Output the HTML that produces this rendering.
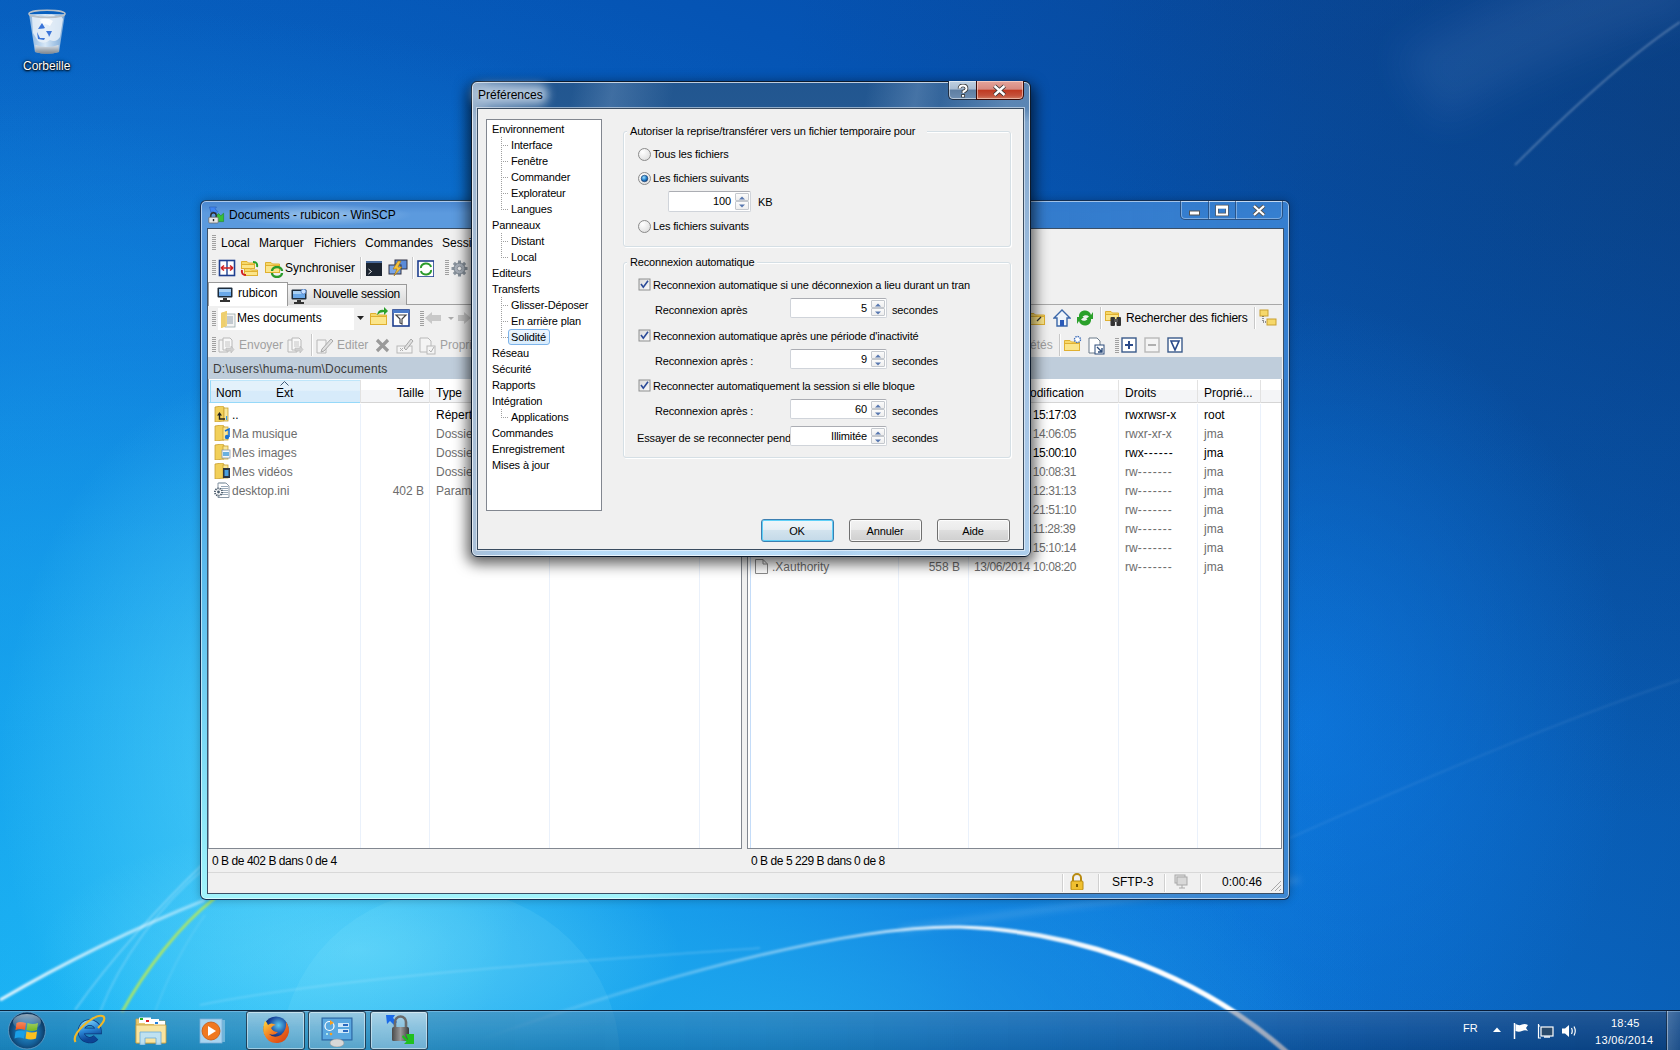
<!DOCTYPE html>
<html><head><meta charset="utf-8">
<style>
*{box-sizing:border-box;margin:0;padding:0}
html,body{width:1680px;height:1050px;overflow:hidden}
body{position:relative;font-family:"Liberation Sans",sans-serif;font-size:12px;color:#000}
.abs{position:absolute}
.t{position:absolute;white-space:pre;line-height:1}
</style></head><body>
<div class="abs" style="left:0;top:0;width:1680px;height:1050px;background:
 radial-gradient(ellipse 270px 400px at 270px 770px, rgba(100,222,252,0.6) 0%, rgba(90,215,250,0) 100%),
 radial-gradient(ellipse 500px 500px at 0px 600px, rgba(20,160,236,0.35) 0%, rgba(20,160,236,0) 100%),
 radial-gradient(ellipse 320px 130px at 360px 950px, rgba(120,225,252,0.55) 0%, rgba(120,225,252,0) 100%),
 radial-gradient(ellipse 1250px 1050px at 130px 1060px, rgba(30,186,246,1) 0%, rgba(25,170,240,0.9) 35%, rgba(20,140,230,0.55) 68%, rgba(20,130,225,0) 100%),
 radial-gradient(ellipse 560px 230px at 760px 1030px, rgba(62,206,250,0.7) 0%, rgba(40,170,240,0.35) 55%, rgba(20,130,225,0) 100%),
 radial-gradient(ellipse 320px 420px at 1310px 720px, rgba(16,130,238,0.55) 0%, rgba(16,130,238,0) 100%),
 radial-gradient(ellipse 900px 700px at 1680px 120px, rgba(14,56,104,0.4) 0%, rgba(14,56,104,0) 100%),
 radial-gradient(ellipse 1500px 1150px at 0px 1050px, rgba(16,130,226,0.45) 0%, rgba(16,130,226,0) 100%),
 linear-gradient(90deg, rgba(10,50,100,0) 65%, rgba(10,50,100,0.2) 100%),
 linear-gradient(200deg,#0848a0 0%,#0554b4 22%,#0864c4 46%,#0a70d2 70%,#0b76d8 100%);"></div>
<svg class="abs" style="left:0;top:0" width="1680" height="1050" viewBox="0 0 1680 1050">
<defs>
<filter id="bl1" x="-20%" y="-20%" width="140%" height="140%"><feGaussianBlur stdDeviation="1.2"/></filter>
<filter id="bl3" x="-20%" y="-20%" width="140%" height="140%"><feGaussianBlur stdDeviation="3"/></filter>
<linearGradient id="arcg" x1="0" x2="1" y1="0" y2="0">
<stop offset="0" stop-color="#fff" stop-opacity="0"/><stop offset="0.45" stop-color="#fff" stop-opacity="0.5"/><stop offset="0.62" stop-color="#fff" stop-opacity="1"/><stop offset="1" stop-color="#fff" stop-opacity="0.9"/></linearGradient>
<linearGradient id="lsw" x1="0" x2="1" y1="0" y2="0">
<stop offset="0" stop-color="#fff" stop-opacity="0.9"/><stop offset="1" stop-color="#fff" stop-opacity="0.4"/></linearGradient>
</defs>
<circle cx="450" cy="1060" r="170" fill="#bff" fill-opacity="0.08"/>
<path d="M480 1040 C 680 968, 860 925, 960 927 C 1060 930, 1190 965, 1290 1055" fill="none" stroke="url(#arcg)" stroke-width="3" filter="url(#bl1)"/>
<path d="M900 930 C 1000 915, 1150 895, 1300 880" fill="none" stroke="#fff" stroke-opacity="0.12" stroke-width="6" filter="url(#bl3)"/><linearGradient id="thk" gradientUnits="userSpaceOnUse" x1="960" y1="0" x2="1120" y2="0"><stop offset="0" stop-color="#fff" stop-opacity="0"/><stop offset="1" stop-color="#fff" stop-opacity="1"/></linearGradient><path d="M960 927 C 1060 930, 1190 965, 1290 1055" fill="none" stroke="url(#thk)" stroke-width="4.5" filter="url(#bl1)"/>
<path d="M200 1005 C 350 975, 600 960, 760 948" fill="none" stroke="#fff" stroke-opacity="0.2" stroke-width="1.5" filter="url(#bl1)"/>
<path d="M0 1000 C 60 965, 130 930, 205 900" fill="none" stroke="url(#lsw)" stroke-width="3" filter="url(#bl1)"/>
<path d="M75 1010 C 110 960, 160 905, 205 862" fill="none" stroke="#fff" stroke-opacity="0.35" stroke-width="1.5" filter="url(#bl1)"/>
<path d="M122 1012 C 145 970, 180 925, 215 898" fill="none" stroke="#b0e860" stroke-opacity="1" stroke-width="2.6" filter="url(#bl1)"/><path d="M100 1012 C 120 960, 160 905, 205 868" fill="none" stroke="#fff" stroke-opacity="0.3" stroke-width="1.2" filter="url(#bl1)"/><path d="M155 1012 C 165 985, 180 950, 205 915" fill="none" stroke="#fff" stroke-opacity="0.2" stroke-width="1" filter="url(#bl1)"/>
<path d="M1290 838 C 1420 780, 1560 720, 1680 680" fill="none" stroke="#fff" stroke-opacity="0.07" stroke-width="2" filter="url(#bl1)"/>
<path d="M1515 165 C 1570 110, 1630 55, 1680 22" fill="none" stroke="#fff" stroke-opacity="0.3" stroke-width="1.5" filter="url(#bl1)"/>
<filter id="bl20" x="-50%" y="-50%" width="200%" height="200%"><feGaussianBlur stdDeviation="18"/></filter><path d="M1420 90 C 1480 50, 1570 10, 1690 -30" fill="none" stroke="#a8c8f0" stroke-opacity="0.09" stroke-width="80" filter="url(#bl20)"/>
</svg>
<svg class="abs" style="left:26px;top:7px;" width="42" height="50" viewBox="0 0 42 50">
<defs>
<linearGradient id="binb" x1="0" x2="1"><stop offset="0" stop-color="#b8d0e8" stop-opacity="0.75"/><stop offset="0.45" stop-color="#eef6fc" stop-opacity="0.9"/><stop offset="1" stop-color="#a8c4e0" stop-opacity="0.7"/></linearGradient>
<linearGradient id="binf" x1="0" x2="0" y1="0" y2="1"><stop offset="0" stop-color="#dfe6ee"/><stop offset="0.5" stop-color="#a8b0b8"/><stop offset="1" stop-color="#7a848e"/></linearGradient>
</defs>
<path d="M3 7 L9 45 Q21 48 33 45 L39 7 Z" fill="url(#binb)"/>
<path d="M6 10 Q12 6 18 11 Q24 5 30 9 Q35 8 37 12 L34 30 Q30 36 24 33 Q18 38 12 34 L7 26Z" fill="#e8f0f8" fill-opacity="0.85"/>
<path d="M14 13 Q20 9 27 14 L24 19 Q20 16 16 18Z" fill="#ffffff" fill-opacity="0.8"/>
<path d="M9.5 38 Q21 42 32.5 38 L33 45 Q21 49 9 45Z" fill="url(#binf)"/>
<ellipse cx="21" cy="6.8" rx="18" ry="3.6" fill="none" stroke="#b8c0c8" stroke-width="1.6"/>
<path d="M12 22 L16 16 L19 21 L17.5 21.5 Z" fill="#3a74d8"/>
<path d="M20 24 L26 24 L23 30 L22.5 28Z" fill="#3a74d8"/>
<path d="M11 25 L14 31 L19 31 L18 33 L12 32Z" fill="#3a74d8"/>
</svg>
<div class="t" style="left:23px;top:60px;font-size:12px;color:#fff;text-shadow:0 1px 2px #000,0 0 2px #000,0 0 4px rgba(0,0,0,0.6)">Corbeille</div>
<div class="abs" style="left:200px;top:200px;width:1090px;height:700px;border-radius:6px;border:1px solid rgba(10,30,60,0.85);
background:linear-gradient(90deg,rgba(44,118,202,0) 0%,rgba(44,118,202,0) 40%,rgba(44,118,202,0.85) 75%,rgba(50,124,206,0.9) 100%),linear-gradient(180deg,#4886d0 0px,#5c9ade 12px,#5a9ade 28px,#4a98de 200px,#5cbcee 380px,#80dcf6 560px,#a2f4fb 700px);
box-shadow:inset 0 0 0 1px rgba(255,255,255,0.55), 0 0 8px rgba(0,0,0,0.25)"></div>
<div class="abs" style="left:222px;top:204px;width:190px;height:22px;background:radial-gradient(ellipse 95px 11px at 95px 11px, rgba(200,225,245,0.55), rgba(200,225,245,0))"></div>
<svg class="abs" style="left:208px;top:206px;" width="18" height="18" viewBox="0 0 18 18">
<path d="M1.5 1 H8.5 L7 2.8 L9.8 5.6 L7.6 7.8 L4.8 5 L3 6.6 Z" fill="#3f86f4" stroke="#2a5ab0" stroke-width="0.6"/>
<path d="M10.5 7.5 L12.8 9.8 L15.6 7.2 V15.6 H7.4 L10 13 L7.8 10.6Z" fill="#38c038" stroke="#1f8a1f" stroke-width="0.6"/>
<path d="M2.8 11.5 V9.5 A2.7 2.7 0 0 1 8.2 9.5 V11.5" fill="none" stroke="#2a2a2a" stroke-width="1.4"/>
<rect x="0.8" y="11.2" width="9.4" height="5.8" rx="0.8" fill="#e8e8e8" stroke="#6a6a6a" stroke-width="0.8"/>
<rect x="4.8" y="13" width="1.4" height="2.2" fill="#222"/>
</svg>
<div class="t" style="left:229px;top:209px;font-size:12px;color:#000;">Documents - rubicon - WinSCP</div>
<div class="abs" style="left:1180px;top:201px;width:103px;height:19px;border:1px solid rgba(30,50,80,0.6);border-top:none;border-radius:0 0 5px 5px;box-shadow:inset 0 0 0 1px rgba(255,255,255,0.35)"></div>
<div class="abs" style="left:1208px;top:201px;width:1px;height:18px;background:rgba(30,50,80,0.55);box-shadow:1px 0 0 rgba(255,255,255,0.35)"></div>
<div class="abs" style="left:1235px;top:201px;width:1px;height:18px;background:rgba(30,50,80,0.55);box-shadow:1px 0 0 rgba(255,255,255,0.35)"></div>
<svg class="abs" style="left:1188px;top:206px;" width="13" height="12" viewBox="0 0 13 12"><rect x="1.5" y="5" width="10" height="4" fill="#fff" stroke="#555" stroke-width="1"/></svg>
<svg class="abs" style="left:1215px;top:204px;" width="14" height="14" viewBox="0 0 14 14"><rect x="2" y="2.5" width="10" height="8" fill="none" stroke="#555" stroke-width="3.4"/><rect x="2" y="2.5" width="10" height="8" fill="none" stroke="#fff" stroke-width="2"/><rect x="2" y="2.5" width="10" height="2.2" fill="#fff"/></svg>
<svg class="abs" style="left:1252px;top:204px;" width="14" height="13" viewBox="0 0 14 13"><path d="M2 2 L12 11 M12 2 L2 11" stroke="#555" stroke-width="4"/><path d="M2 2 L12 11 M12 2 L2 11" stroke="#fff" stroke-width="2.2"/></svg>
<div class="abs" style="left:207px;top:228px;width:1077px;height:666px;background:#f0f0f0;border:1px solid #3b4f66"></div>
<svg class="abs" style="left:212px;top:235px;" width="4" height="16" viewBox="0 0 4 16"><rect x="0" y="0" width="4" height="1" fill="#a0a0a0"/><rect x="0" y="2" width="4" height="1" fill="#a0a0a0"/><rect x="0" y="4" width="4" height="1" fill="#a0a0a0"/><rect x="0" y="6" width="4" height="1" fill="#a0a0a0"/><rect x="0" y="8" width="4" height="1" fill="#a0a0a0"/><rect x="0" y="10" width="4" height="1" fill="#a0a0a0"/><rect x="0" y="12" width="4" height="1" fill="#a0a0a0"/><rect x="0" y="14" width="4" height="1" fill="#a0a0a0"/></svg>
<div class="t" style="left:221px;top:237px;font-size:12px;color:#000;">Local</div>
<div class="t" style="left:259px;top:237px;font-size:12px;color:#000;">Marquer</div>
<div class="t" style="left:314px;top:237px;font-size:12px;color:#000;">Fichiers</div>
<div class="t" style="left:365px;top:237px;font-size:12px;color:#000;">Commandes</div>
<div class="t" style="left:442px;top:237px;font-size:12px;color:#000;">Sessions</div>
<svg class="abs" style="left:212px;top:260px;" width="4" height="16" viewBox="0 0 4 16"><rect x="0" y="0" width="4" height="1" fill="#a0a0a0"/><rect x="0" y="2" width="4" height="1" fill="#a0a0a0"/><rect x="0" y="4" width="4" height="1" fill="#a0a0a0"/><rect x="0" y="6" width="4" height="1" fill="#a0a0a0"/><rect x="0" y="8" width="4" height="1" fill="#a0a0a0"/><rect x="0" y="10" width="4" height="1" fill="#a0a0a0"/><rect x="0" y="12" width="4" height="1" fill="#a0a0a0"/><rect x="0" y="14" width="4" height="1" fill="#a0a0a0"/></svg>
<svg class="abs" style="left:218px;top:259px;" width="18" height="18" viewBox="0 0 18 18"><rect x="1.5" y="1.5" width="15" height="15" fill="#fff" stroke="#1f3f8f" stroke-width="1.6"/><line x1="9" y1="1" x2="9" y2="17" stroke="#1f3f8f" stroke-width="1.4"/><path d="M3 9 H15 M3 9 L6 6.5 M3 9 L6 11.5 M15 9 L12 6.5 M15 9 L12 11.5" stroke="#d02020" stroke-width="1.6" fill="none"/></svg>
<svg class="abs" style="left:241px;top:259px;" width="14" height="10" viewBox="0 0 14 10"><path d="M0.5 2.5 H6 L7.5 4 H13.5 V9.5 H0.5Z" fill="#f6d86a" stroke="#e0b030" stroke-width="1"/><rect x="0.5" y="5.5" width="13" height="4" fill="#fbe58a" stroke="#e0b030" stroke-width="1"/></svg>
<svg class="abs" style="left:244px;top:266px;" width="14" height="10" viewBox="0 0 14 10"><path d="M0.5 2.5 H6 L7.5 4 H13.5 V9.5 H0.5Z" fill="#f6d86a" stroke="#e0b030" stroke-width="1"/><rect x="0.5" y="5.5" width="13" height="4" fill="#fbe58a" stroke="#e0b030" stroke-width="1"/></svg>
<svg class="abs" style="left:240px;top:259px;" width="20" height="19" viewBox="0 0 20 19"><path d="M13 3 Q18 3 17 8" stroke="#28a028" stroke-width="2" fill="none"/><path d="M6 16 Q1 16 2 11" stroke="#d02020" stroke-width="2" fill="none"/></svg>
<svg class="abs" style="left:265px;top:260px;" width="15" height="13" viewBox="0 0 15 13"><path d="M0.5 2.5 H6 L7.5 4 H14.5 V12.5 H0.5Z" fill="#f6d86a" stroke="#e0b030" stroke-width="1"/><rect x="0.5" y="5.5" width="14" height="7" fill="#fbe58a" stroke="#e0b030" stroke-width="1"/></svg>
<svg class="abs" style="left:270px;top:266px;" width="14" height="12" viewBox="0 0 14 12"><path d="M2 5 A5 4 0 0 1 12 5" stroke="#2a9a2a" stroke-width="2.4" fill="none"/><path d="M12 7 A5 4 0 0 1 2 7" stroke="#2a9a2a" stroke-width="2.4" fill="none"/></svg>
<div class="t" style="left:285px;top:262px;font-size:12px;color:#000;">Synchroniser</div>
<div class="abs" style="left:360px;top:257px;width:1px;height:22px;background:#c8c8c8;box-shadow:1px 0 0 #fff"></div>
<svg class="abs" style="left:366px;top:261px;" width="16" height="15" viewBox="0 0 16 15"><rect x="0" y="0" width="16" height="15" fill="#1c2430"/><rect x="0" y="0" width="16" height="2" fill="#4a6a9a"/><path d="M2.5 8 L5.5 10.5 L2.5 13" stroke="#fff" stroke-width="0.9" fill="none"/></svg>
<svg class="abs" style="left:388px;top:259px;" width="20" height="18" viewBox="0 0 20 18"><rect x="7" y="1" width="12" height="9" fill="#5a8ad8" stroke="#334" stroke-width="1"/><rect x="1" y="6" width="12" height="9" fill="#7aa6e8" stroke="#334" stroke-width="1"/><path d="M10 2 L5 10 H9 L6 17 L14 8 H10 L13 2Z" fill="#f5c23a" stroke="#a07010" stroke-width="0.6"/></svg>
<div class="abs" style="left:412px;top:257px;width:1px;height:22px;background:#c8c8c8;box-shadow:1px 0 0 #fff"></div>
<svg class="abs" style="left:417px;top:260px;" width="17" height="17" viewBox="0 0 17 17"><rect x="1" y="1" width="16" height="16" fill="#fff" stroke="#1f3f8f" stroke-width="1.6"/><path d="M4 8 A5 4 0 0 1 14 7" stroke="#2a9a2a" stroke-width="2" fill="none"/><path d="M14 10 A5 4 0 0 1 4 11" stroke="#2a9a2a" stroke-width="2" fill="none"/></svg>
<svg class="abs" style="left:445px;top:260px;" width="4" height="16" viewBox="0 0 4 16"><rect x="0" y="0" width="4" height="1" fill="#a0a0a0"/><rect x="0" y="2" width="4" height="1" fill="#a0a0a0"/><rect x="0" y="4" width="4" height="1" fill="#a0a0a0"/><rect x="0" y="6" width="4" height="1" fill="#a0a0a0"/><rect x="0" y="8" width="4" height="1" fill="#a0a0a0"/><rect x="0" y="10" width="4" height="1" fill="#a0a0a0"/><rect x="0" y="12" width="4" height="1" fill="#a0a0a0"/><rect x="0" y="14" width="4" height="1" fill="#a0a0a0"/></svg>
<svg class="abs" style="left:451px;top:260px;" width="17" height="17" viewBox="0 0 17 17"><rect x="7" y="0.5" width="3" height="4" fill="#8a949e" transform="rotate(0 8.5 8.5)"/><rect x="7" y="0.5" width="3" height="4" fill="#8a949e" transform="rotate(45 8.5 8.5)"/><rect x="7" y="0.5" width="3" height="4" fill="#8a949e" transform="rotate(90 8.5 8.5)"/><rect x="7" y="0.5" width="3" height="4" fill="#8a949e" transform="rotate(135 8.5 8.5)"/><rect x="7" y="0.5" width="3" height="4" fill="#8a949e" transform="rotate(180 8.5 8.5)"/><rect x="7" y="0.5" width="3" height="4" fill="#8a949e" transform="rotate(225 8.5 8.5)"/><rect x="7" y="0.5" width="3" height="4" fill="#8a949e" transform="rotate(270 8.5 8.5)"/><rect x="7" y="0.5" width="3" height="4" fill="#8a949e" transform="rotate(315 8.5 8.5)"/><circle cx="8.5" cy="8.5" r="5.5" fill="#a8b0ba" stroke="#7a848e" stroke-width="1"/><circle cx="8.5" cy="8.5" r="2.2" fill="#f0f0f0" stroke="#7a848e" stroke-width="0.8"/></svg>
<div class="abs" style="left:208px;top:304px;width:1074px;height:1px;background:#a0a0a0"></div>
<div class="abs" style="left:1029px;top:304px;width:253px;height:1px;background:#a8a8a8"></div>
<div class="abs" style="left:287px;top:284px;width:120px;height:21px;background:linear-gradient(180deg,#f2f2f2,#e6e6e6 50%,#d8d8d8);border:1px solid #9a9a9a;border-bottom:none"></div>
<div class="abs" style="left:208px;top:282px;width:80px;height:24px;background:#fff;border:1px solid #9a9a9a;border-bottom:none"></div>
<svg class="abs" style="left:217px;top:287px;" width="16" height="15" viewBox="0 0 16 15"><rect x="0.5" y="0.5" width="15" height="10" rx="1" fill="#1d2c3c"/><rect x="2" y="2" width="12" height="7" fill="#6aa8e8"/><rect x="2" y="2" width="12" height="3" fill="#a8d0f4"/><rect x="6" y="11" width="4" height="2" fill="#333"/><rect x="3" y="13" width="10" height="2" fill="#333"/></svg>
<div class="t" style="left:238px;top:287px;font-size:12px;color:#000;">rubicon</div>
<svg class="abs" style="left:291px;top:289px;" width="16" height="15" viewBox="0 0 16 15"><rect x="0.5" y="0.5" width="15" height="10" rx="1" fill="#1d2c3c"/><rect x="2" y="2" width="12" height="7" fill="#6aa8e8"/><rect x="2" y="2" width="12" height="3" fill="#a8d0f4"/><rect x="6" y="11" width="4" height="2" fill="#333"/><rect x="3" y="13" width="10" height="2" fill="#333"/><circle cx="12.5" cy="2.5" r="2.5" fill="#c8e0ff" stroke="#4a7ac0" stroke-width="0.8"/></svg>
<div class="t" style="left:313px;top:288px;font-size:12px;color:#000;letter-spacing:-0.23px">Nouvelle session</div>
<svg class="abs" style="left:212px;top:311px;" width="4" height="16" viewBox="0 0 4 16"><rect x="0" y="0" width="4" height="1" fill="#a0a0a0"/><rect x="0" y="2" width="4" height="1" fill="#a0a0a0"/><rect x="0" y="4" width="4" height="1" fill="#a0a0a0"/><rect x="0" y="6" width="4" height="1" fill="#a0a0a0"/><rect x="0" y="8" width="4" height="1" fill="#a0a0a0"/><rect x="0" y="10" width="4" height="1" fill="#a0a0a0"/><rect x="0" y="12" width="4" height="1" fill="#a0a0a0"/><rect x="0" y="14" width="4" height="1" fill="#a0a0a0"/></svg>
<div class="abs" style="left:218px;top:308px;width:148px;height:22px;background:#fff"></div>
<div class="abs" style="left:354px;top:308px;width:12px;height:22px;background:#f0f0f0"></div>
<svg class="abs" style="left:357px;top:316px;" width="7" height="4" viewBox="0 0 7 4"><path d="M0 0 H7 L3.5 4Z" fill="#222"/></svg>
<svg class="abs" style="left:220px;top:311px;" width="16" height="17" viewBox="0 0 16 17"><path d="M1 2 L7 0 V15 L1 17Z" fill="#e8c050"/><rect x="5" y="3" width="10" height="13" fill="#f4f4f4" stroke="#9aa" stroke-width="0.8"/><path d="M7 6 H13 M7 8 H13 M7 10 H13 M7 12 H13" stroke="#7a8a9a" stroke-width="0.8"/><path d="M1 2 L7 0 V15 L1 17Z" fill="#f0d070" fill-opacity="0.9"/></svg>
<div class="t" style="left:237px;top:312px;font-size:12px;color:#000;">Mes documents</div>
<svg class="abs" style="left:370px;top:311px;" width="17" height="14" viewBox="0 0 17 14"><path d="M0.5 2.5 H6 L7.5 4 H16.5 V13.5 H0.5Z" fill="#f6d86a" stroke="#e0b030" stroke-width="1"/><rect x="0.5" y="5.5" width="16" height="8" fill="#fbe58a" stroke="#e0b030" stroke-width="1"/></svg>
<svg class="abs" style="left:376px;top:307px;" width="12" height="9" viewBox="0 0 12 9"><path d="M1 8 Q2 2 8 3 L8 0 L12 4 L8 8 L8 5 Q4 5 1 8Z" fill="#2aa02a"/></svg>
<svg class="abs" style="left:392px;top:309px;" width="18" height="18" viewBox="0 0 18 18"><rect x="1" y="1" width="16" height="16" fill="#fff" stroke="#1f3f8f" stroke-width="1.6"/><rect x="1" y="1" width="16" height="3" fill="#4a7ac8"/><path d="M4 6 H14 L10 10 V15 L8 14 V10Z" fill="none" stroke="#444" stroke-width="1.2"/></svg>
<svg class="abs" style="left:420px;top:311px;" width="4" height="16" viewBox="0 0 4 16"><rect x="0" y="0" width="4" height="1" fill="#a0a0a0"/><rect x="0" y="2" width="4" height="1" fill="#a0a0a0"/><rect x="0" y="4" width="4" height="1" fill="#a0a0a0"/><rect x="0" y="6" width="4" height="1" fill="#a0a0a0"/><rect x="0" y="8" width="4" height="1" fill="#a0a0a0"/><rect x="0" y="10" width="4" height="1" fill="#a0a0a0"/><rect x="0" y="12" width="4" height="1" fill="#a0a0a0"/><rect x="0" y="14" width="4" height="1" fill="#a0a0a0"/></svg>
<svg class="abs" style="left:425px;top:312px;" width="17" height="12" viewBox="0 0 17 12"><path d="M0 6 L7 0 V3 H16 V9 H7 V12Z" fill="#c8c8c8"/></svg>
<svg class="abs" style="left:448px;top:317px;" width="6" height="4" viewBox="0 0 6 4"><path d="M0 0 H6 L3 3Z" fill="#aaa"/></svg>
<svg class="abs" style="left:458px;top:312px;" width="13" height="12" viewBox="0 0 13 12"><path d="M13 6 L6 0 V3 H0 V9 H6 V12Z" fill="#c8c8c8"/></svg>
<svg class="abs" style="left:212px;top:337px;" width="4" height="16" viewBox="0 0 4 16"><rect x="0" y="0" width="4" height="1" fill="#a0a0a0"/><rect x="0" y="2" width="4" height="1" fill="#a0a0a0"/><rect x="0" y="4" width="4" height="1" fill="#a0a0a0"/><rect x="0" y="6" width="4" height="1" fill="#a0a0a0"/><rect x="0" y="8" width="4" height="1" fill="#a0a0a0"/><rect x="0" y="10" width="4" height="1" fill="#a0a0a0"/><rect x="0" y="12" width="4" height="1" fill="#a0a0a0"/><rect x="0" y="14" width="4" height="1" fill="#a0a0a0"/></svg>
<svg class="abs" style="left:218px;top:337px;" width="17" height="17" viewBox="0 0 17 17"><path d="M1 3 H8 L10 5 V15 H1Z" fill="#f4f4f4" stroke="#b8b8b8" stroke-width="1"/><path d="M5 1 H12 L14 3 V13 H5Z" fill="#f8f8f8" stroke="#b8b8b8" stroke-width="1"/><path d="M7 5 H12 M7 7 H12 M7 9 H12" stroke="#b8b8b8" stroke-width="0.8"/><path d="M8 11 L13 11 L13 9 L16 12.5 L13 16 L13 14 L8 14Z" fill="#d0d0d0" stroke="#b8b8b8" stroke-width="0.6"/></svg>
<div class="t" style="left:239px;top:339px;font-size:12px;color:#a0a0a0;">Envoyer</div>
<svg class="abs" style="left:287px;top:337px;" width="17" height="17" viewBox="0 0 17 17"><path d="M1 3 H8 L10 5 V15 H1Z" fill="#f4f4f4" stroke="#b8b8b8" stroke-width="1"/><path d="M5 1 H12 L14 3 V13 H5Z" fill="#f8f8f8" stroke="#b8b8b8" stroke-width="1"/><path d="M7 5 H12 M7 7 H12 M7 9 H12" stroke="#b8b8b8" stroke-width="0.8"/><path d="M8 11 L13 11 L13 9 L16 12.5 L13 16 L13 14 L8 14Z" fill="#d0d0d0" stroke="#b8b8b8" stroke-width="0.6"/></svg>
<div class="abs" style="left:311px;top:334px;width:1px;height:22px;background:#c8c8c8;box-shadow:1px 0 0 #fff"></div>
<svg class="abs" style="left:316px;top:337px;" width="18" height="18" viewBox="0 0 18 18"><path d="M1 3 H10 V16 H1Z" fill="#f4f4f4" stroke="#b8b8b8" stroke-width="1"/><path d="M6 12 L15 2 L17 4 L8 14 L5 15Z" fill="#e0e0e0" stroke="#a8a8a8" stroke-width="1"/></svg>
<div class="t" style="left:337px;top:339px;font-size:12px;color:#a0a0a0;">Editer</div>
<svg class="abs" style="left:375px;top:338px;" width="15" height="15" viewBox="0 0 15 15"><path d="M2 2 L13 13 M13 2 L2 13" stroke="#9a9a9a" stroke-width="3.2"/></svg>
<svg class="abs" style="left:396px;top:337px;" width="18" height="18" viewBox="0 0 18 18"><rect x="1" y="9" width="15" height="7" fill="#f4f4f4" stroke="#b8b8b8"/><path d="M4 11 L7 14 M7 11 L4 14" stroke="#b0b0b0"/><path d="M8 11 L15 2 L17 4 L10 13Z" fill="#e0e0e0" stroke="#a8a8a8"/></svg>
<svg class="abs" style="left:419px;top:337px;" width="18" height="18" viewBox="0 0 18 18"><path d="M1 1 H9 L12 4 V15 H1Z" fill="#f4f4f4" stroke="#b8b8b8"/><rect x="8" y="9" width="8" height="8" fill="#f4f4f4" stroke="#b8b8b8"/><path d="M10 13 L12 15 L15 10" stroke="#b0b0b0" fill="none"/></svg>
<div class="t" style="left:440px;top:339px;font-size:12px;color:#a0a0a0;">Propriétés</div>
<div class="abs" style="left:208px;top:357px;width:534px;height:22px;background:#bfcddb"></div>
<div class="t" style="left:213px;top:363px;font-size:12px;color:#3c3c3c;letter-spacing:0.19px">D:\users\huma-num\Documents</div>
<div class="abs" style="left:208px;top:379px;width:534px;height:470px;background:#fff;border-right:1px solid #828790;border-bottom:1px solid #828790;border-left:1px solid #9aa6b6"></div>
<div class="abs" style="left:209px;top:380px;width:532px;height:23px;background:linear-gradient(180deg,#ffffff 0,#ffffff 45%,#f4f5f7 46%,#f4f5f7 100%);border-bottom:1px solid #d5d5d5"></div>
<div class="abs" style="left:210px;top:380px;width:151px;height:23px;background:linear-gradient(180deg,#e3f1fb 0,#e3f1fb 45%,#d7ebfa 46%,#d7ebfa 100%);border:1px solid #96d9f9;border-top-color:#bfe6fa"></div>
<svg class="abs" style="left:280px;top:381px;" width="9" height="5" viewBox="0 0 9 5"><path d="M0.5 4.5 L4.5 0.5 L8.5 4.5" fill="none" stroke="#3c5a7a" stroke-width="1"/></svg>
<div class="abs" style="left:360px;top:380px;width:1px;height:23px;background:#e2e2e2"></div>
<div class="abs" style="left:429px;top:380px;width:1px;height:23px;background:#e2e2e2"></div>
<div class="abs" style="left:549px;top:380px;width:1px;height:23px;background:#e2e2e2"></div>
<div class="abs" style="left:699px;top:380px;width:1px;height:23px;background:#e2e2e2"></div>
<div class="t" style="left:216px;top:387px;font-size:12px;color:#000;">Nom</div>
<div class="t" style="left:276px;top:387px;font-size:12px;color:#000;">Ext</div>
<div class="t" style="right:1256px;top:387px;font-size:12px;color:#000;">Taille</div>
<div class="t" style="left:436px;top:387px;font-size:12px;color:#000;">Type</div>
<div class="abs" style="left:360px;top:404px;width:1px;height:444px;background:#eaf1fb"></div>
<div class="abs" style="left:429px;top:404px;width:1px;height:444px;background:#eaf1fb"></div>
<div class="abs" style="left:549px;top:404px;width:1px;height:444px;background:#eaf1fb"></div>
<div class="abs" style="left:699px;top:404px;width:1px;height:444px;background:#eaf1fb"></div>
<svg class="abs" style="left:214px;top:406px;" width="16" height="16" viewBox="0 0 16 16"><path d="M1 1 L8 0 L10 1 V15 L1 16Z" fill="#f2d05a" stroke="#c9a030" stroke-width="0.8"/><rect x="10" y="2" width="4" height="13" fill="#f8e69a" stroke="#c9a030" stroke-width="0.8"/><path d="M11 13 H5.5 V9" stroke="#222" stroke-width="1.4" fill="none"/><path d="M3 9.5 L5.5 6 L8 9.5Z" fill="#222"/><rect x="12" y="10" width="1.2" height="4" fill="#3a9ae0"/></svg>
<div class="t" style="left:232px;top:409px;font-size:12px;color:#000;">..</div>
<div class="t" style="left:436px;top:409px;font-size:12px;color:#000;">Répertoire parent</div>
<svg class="abs" style="left:214px;top:425px;" width="17" height="16" viewBox="0 0 17 16"><path d="M1 1 L8 0 L10 1 V15 L1 16Z" fill="#f2d05a" stroke="#c9a030" stroke-width="0.8"/><rect x="9" y="2" width="5" height="13" fill="#f8e69a" stroke="#c9a030" stroke-width="0.8"/><path d="M11 6 L15 4 V12" stroke="#1a70d0" stroke-width="1.6" fill="none"/><circle cx="13" cy="12" r="2.2" fill="#1a70d0"/></svg>
<div class="t" style="left:232px;top:428px;font-size:12px;color:#6d6d6d;">Ma musique</div>
<div class="t" style="left:436px;top:428px;font-size:12px;color:#6d6d6d;">Dossier système</div>
<svg class="abs" style="left:214px;top:444px;" width="17" height="16" viewBox="0 0 17 16"><path d="M1 1 L8 0 L10 1 V15 L1 16Z" fill="#f2d05a" stroke="#c9a030" stroke-width="0.8"/><rect x="9" y="2" width="5" height="13" fill="#f8e69a" stroke="#c9a030" stroke-width="0.8"/><rect x="8" y="6" width="8" height="8" fill="#f4f8fc" stroke="#8a9aaa" stroke-width="0.8"/><rect x="9" y="8" width="6" height="4" fill="#6ab0e0"/></svg>
<div class="t" style="left:232px;top:447px;font-size:12px;color:#6d6d6d;">Mes images</div>
<div class="t" style="left:436px;top:447px;font-size:12px;color:#6d6d6d;">Dossier système</div>
<svg class="abs" style="left:214px;top:463px;" width="17" height="16" viewBox="0 0 17 16"><path d="M1 1 L8 0 L10 1 V15 L1 16Z" fill="#f2d05a" stroke="#c9a030" stroke-width="0.8"/><rect x="9" y="2" width="5" height="13" fill="#f8e69a" stroke="#c9a030" stroke-width="0.8"/><rect x="9" y="5" width="7" height="10" fill="#2a3440"/><rect x="10.5" y="7" width="4" height="6" fill="#4aa0e0"/></svg>
<div class="t" style="left:232px;top:466px;font-size:12px;color:#6d6d6d;">Mes vidéos</div>
<div class="t" style="left:436px;top:466px;font-size:12px;color:#6d6d6d;">Dossier système</div>
<svg class="abs" style="left:214px;top:482px;" width="16" height="16" viewBox="0 0 16 16"><path d="M4 1 H12 L15 4 V15.5 H4Z" fill="#fff" stroke="#7a8a9a" stroke-width="0.9"/><path d="M5 1.5 L6 0.5 L7 1.5 L8 0.5 L9 1.5 L10 0.5 L11 1.5" stroke="#8a9aaa" stroke-width="0.6" fill="none"/><path d="M7 4.5 H14 M7 6.5 H14 M7 8.5 H14 M7 10.5 H14 M7 12.5 H14" stroke="#9aaab8" stroke-width="1"/><circle cx="4.5" cy="10" r="3.6" fill="#fff" stroke="#4a5a6a" stroke-width="1.8" stroke-dasharray="1.3 0.9"/><circle cx="4.5" cy="10" r="1.4" fill="#4a5a6a"/></svg>
<div class="t" style="left:232px;top:485px;font-size:12px;color:#6d6d6d;">desktop.ini</div>
<div class="t" style="right:1256px;top:485px;font-size:12px;color:#6d6d6d;">402 B</div>
<div class="t" style="left:436px;top:485px;font-size:12px;color:#6d6d6d;">Paramètres de configuration</div>
<div class="t" style="left:212px;top:855px;font-size:12px;color:#000;letter-spacing:-0.45px">0 B de 402 B dans 0 de 4</div>
<div class="t" style="left:751px;top:855px;font-size:12px;color:#000;letter-spacing:-0.45px">0 B de 5 229 B dans 0 de 8</div>
<div class="abs" style="left:208px;top:872px;width:1074px;height:1px;background:#d8d8d8"></div>
<div class="abs" style="left:742px;top:305px;width:6px;height:544px;background:#f0f0f0"></div>
<svg class="abs" style="left:1028px;top:311px;" width="17" height="14" viewBox="0 0 17 14"><path d="M0.5 2.5 H6 L7.5 4 H16.5 V13.5 H0.5Z" fill="#f6d86a" stroke="#e0b030" stroke-width="1"/><rect x="0.5" y="5.5" width="16" height="8" fill="#fbe58a" stroke="#e0b030" stroke-width="1"/></svg>
<svg class="abs" style="left:1036px;top:316px;" width="6" height="6" viewBox="0 0 6 6"><path d="M1 5 L5 1" stroke="#333" stroke-width="1.2"/></svg>
<svg class="abs" style="left:1053px;top:309px;" width="18" height="18" viewBox="0 0 18 18"><path d="M1 9 L9 1 L17 9 H14 V17 H4 V9Z" fill="#eef4fa" stroke="#3a66a8" stroke-width="1.4"/><rect x="7" y="11" width="4" height="6" fill="#2a5ab8"/></svg>
<svg class="abs" style="left:1076px;top:309px;" width="18" height="18" viewBox="0 0 18 18"><path d="M3 8 A6 5.5 0 0 1 15 6 L17 3 V10 H10 L13 7.5 A4 3.5 0 0 0 6 9Z" fill="#2aa02a"/><path d="M15 10 A6 5.5 0 0 1 3 12 L1 15 V8 H8 L5 10.5 A4 3.5 0 0 0 12 9Z" fill="#2aa02a"/></svg>
<div class="abs" style="left:1100px;top:307px;width:1px;height:22px;background:#c8c8c8;box-shadow:1px 0 0 #fff"></div>
<svg class="abs" style="left:1105px;top:309px;" width="14" height="12" viewBox="0 0 14 12"><path d="M0.5 2.5 H6 L7.5 4 H13.5 V11.5 H0.5Z" fill="#f6d86a" stroke="#e0b030" stroke-width="1"/><rect x="0.5" y="5.5" width="13" height="6" fill="#fbe58a" stroke="#e0b030" stroke-width="1"/></svg>
<svg class="abs" style="left:1110px;top:315px;" width="12" height="12" viewBox="0 0 12 12"><rect x="0.5" y="2" width="4.5" height="9" rx="1" fill="#333"/><rect x="6.5" y="2" width="4.5" height="9" rx="1" fill="#333"/><rect x="4" y="4" width="4" height="3" fill="#555"/></svg>
<div class="t" style="left:1126px;top:312px;font-size:12px;color:#000;letter-spacing:-0.2px">Rechercher des fichiers</div>
<div class="abs" style="left:1254px;top:307px;width:1px;height:22px;background:#c8c8c8;box-shadow:1px 0 0 #fff"></div>
<svg class="abs" style="left:1259px;top:309px;" width="18" height="18" viewBox="0 0 18 18"><rect x="1" y="1" width="8" height="6" fill="#f6d86a" stroke="#c9a030"/><rect x="8" y="10" width="9" height="6" fill="#f6d86a" stroke="#c9a030"/><path d="M4 7 V13 H8" stroke="#333" stroke-dasharray="1 1" fill="none"/></svg>
<div class="t" style="left:1030px;top:339px;font-size:12px;color:#a0a0a0;">étés</div>
<div class="abs" style="left:1059px;top:334px;width:1px;height:22px;background:#c8c8c8;box-shadow:1px 0 0 #fff"></div>
<svg class="abs" style="left:1064px;top:338px;" width="16" height="13" viewBox="0 0 16 13"><path d="M0.5 2.5 H6 L7.5 4 H15.5 V12.5 H0.5Z" fill="#f6d86a" stroke="#e0b030" stroke-width="1"/><rect x="0.5" y="5.5" width="15" height="7" fill="#fbe58a" stroke="#e0b030" stroke-width="1"/></svg>
<svg class="abs" style="left:1073px;top:335px;" width="9" height="9" viewBox="0 0 9 9"><circle cx="4.5" cy="4.5" r="3" fill="#fff" stroke="#3a6ab8" stroke-width="1.4" stroke-dasharray="1.5 0.8"/></svg>
<svg class="abs" style="left:1088px;top:337px;" width="17" height="18" viewBox="0 0 17 18"><path d="M1 1 H9 L12 4 V16 H1Z" fill="#fff" stroke="#6a7a8a"/><rect x="7" y="8" width="9" height="9" fill="#fff" stroke="#2a4a7a"/><path d="M9 10 L14 15 M14 11 V15 H10" stroke="#2a4a7a" stroke-width="1.4" fill="none"/></svg>
<svg class="abs" style="left:1115px;top:338px;" width="4" height="16" viewBox="0 0 4 16"><rect x="0" y="0" width="4" height="1" fill="#a0a0a0"/><rect x="0" y="2" width="4" height="1" fill="#a0a0a0"/><rect x="0" y="4" width="4" height="1" fill="#a0a0a0"/><rect x="0" y="6" width="4" height="1" fill="#a0a0a0"/><rect x="0" y="8" width="4" height="1" fill="#a0a0a0"/><rect x="0" y="10" width="4" height="1" fill="#a0a0a0"/><rect x="0" y="12" width="4" height="1" fill="#a0a0a0"/><rect x="0" y="14" width="4" height="1" fill="#a0a0a0"/></svg>
<svg class="abs" style="left:1121px;top:337px;" width="16" height="16" viewBox="0 0 16 16"><rect x="1" y="1" width="14" height="14" fill="#fff" stroke="#3a5a8a" stroke-width="1.4"/><path d="M8 4 V12 M4 8 H12" stroke="#2a4a8a" stroke-width="2"/></svg>
<svg class="abs" style="left:1144px;top:337px;" width="16" height="16" viewBox="0 0 16 16"><rect x="1" y="1" width="14" height="14" fill="#f4f4f4" stroke="#b8b8b8" stroke-width="1.4"/><path d="M4 8 H12" stroke="#b0b0b0" stroke-width="2"/></svg>
<svg class="abs" style="left:1167px;top:337px;" width="16" height="16" viewBox="0 0 16 16"><rect x="1" y="1" width="14" height="14" fill="#fff" stroke="#3a5a8a" stroke-width="1.4"/><path d="M4 4 H12 L8 13Z" fill="none" stroke="#2a4a8a" stroke-width="1.6"/></svg>
<div class="abs" style="left:748px;top:357px;width:534px;height:22px;background:#bfcddb"></div>
<div class="abs" style="left:747px;top:379px;width:535px;height:470px;background:#fff;border-right:1px solid #828790;border-bottom:1px solid #828790;border-left:1px solid #828790"></div>
<div class="abs" style="left:750px;top:380px;width:1px;height:468px;background:#c4dcf8"></div>
<div class="abs" style="left:748px;top:380px;width:533px;height:23px;background:linear-gradient(180deg,#ffffff 0,#ffffff 45%,#f4f5f7 46%,#f4f5f7 100%);border-bottom:1px solid #d5d5d5"></div>
<div class="abs" style="left:898px;top:380px;width:1px;height:23px;background:#e2e2e2"></div>
<div class="abs" style="left:898px;top:404px;width:1px;height:444px;background:#eaf1fb"></div>
<div class="abs" style="left:968px;top:380px;width:1px;height:23px;background:#e2e2e2"></div>
<div class="abs" style="left:968px;top:404px;width:1px;height:444px;background:#eaf1fb"></div>
<div class="abs" style="left:1118px;top:380px;width:1px;height:23px;background:#e2e2e2"></div>
<div class="abs" style="left:1118px;top:404px;width:1px;height:444px;background:#eaf1fb"></div>
<div class="abs" style="left:1197px;top:380px;width:1px;height:23px;background:#e2e2e2"></div>
<div class="abs" style="left:1197px;top:404px;width:1px;height:444px;background:#eaf1fb"></div>
<div class="abs" style="left:1260px;top:380px;width:1px;height:23px;background:#e2e2e2"></div>
<div class="abs" style="left:1260px;top:404px;width:1px;height:444px;background:#eaf1fb"></div>
<div class="t" style="left:1020px;top:387px;font-size:12px;color:#000;">Modification</div>
<div class="t" style="left:1125px;top:387px;font-size:12px;color:#000;">Droits</div>
<div class="t" style="left:1204px;top:387px;font-size:12px;color:#000;">Proprié...</div>
<div class="t" style="left:974px;top:409px;font-size:12px;color:#000;letter-spacing:-0.42px">13/06/2014 15:17:03</div>
<div class="t" style="left:1125px;top:409px;font-size:12px;color:#000;">rwxrwsr-x</div>
<div class="t" style="left:1204px;top:409px;font-size:12px;color:#000;">root</div>
<div class="t" style="left:974px;top:428px;font-size:12px;color:#6d6d6d;letter-spacing:-0.42px">13/06/2014 14:06:05</div>
<div class="t" style="left:1125px;top:428px;font-size:12px;color:#6d6d6d;">rwxr-xr-x</div>
<div class="t" style="left:1204px;top:428px;font-size:12px;color:#6d6d6d;">jma</div>
<div class="t" style="left:974px;top:447px;font-size:12px;color:#000;letter-spacing:-0.42px">13/06/2014 15:00:10</div>
<div class="t" style="left:1125px;top:447px;font-size:12px;color:#000;">rwx<span style="letter-spacing:1px">-</span><span style="letter-spacing:1px">-</span><span style="letter-spacing:1px">-</span><span style="letter-spacing:1px">-</span><span style="letter-spacing:1px">-</span><span style="letter-spacing:1px">-</span></div>
<div class="t" style="left:1204px;top:447px;font-size:12px;color:#000;">jma</div>
<div class="t" style="left:974px;top:466px;font-size:12px;color:#6d6d6d;letter-spacing:-0.42px">13/06/2014 10:08:31</div>
<div class="t" style="left:1125px;top:466px;font-size:12px;color:#6d6d6d;">rw<span style="letter-spacing:1px">-</span><span style="letter-spacing:1px">-</span><span style="letter-spacing:1px">-</span><span style="letter-spacing:1px">-</span><span style="letter-spacing:1px">-</span><span style="letter-spacing:1px">-</span><span style="letter-spacing:1px">-</span></div>
<div class="t" style="left:1204px;top:466px;font-size:12px;color:#6d6d6d;">jma</div>
<div class="t" style="left:974px;top:485px;font-size:12px;color:#6d6d6d;letter-spacing:-0.42px">13/06/2014 12:31:13</div>
<div class="t" style="left:1125px;top:485px;font-size:12px;color:#6d6d6d;">rw<span style="letter-spacing:1px">-</span><span style="letter-spacing:1px">-</span><span style="letter-spacing:1px">-</span><span style="letter-spacing:1px">-</span><span style="letter-spacing:1px">-</span><span style="letter-spacing:1px">-</span><span style="letter-spacing:1px">-</span></div>
<div class="t" style="left:1204px;top:485px;font-size:12px;color:#6d6d6d;">jma</div>
<div class="t" style="left:974px;top:504px;font-size:12px;color:#6d6d6d;letter-spacing:-0.42px">13/06/2014 21:51:10</div>
<div class="t" style="left:1125px;top:504px;font-size:12px;color:#6d6d6d;">rw<span style="letter-spacing:1px">-</span><span style="letter-spacing:1px">-</span><span style="letter-spacing:1px">-</span><span style="letter-spacing:1px">-</span><span style="letter-spacing:1px">-</span><span style="letter-spacing:1px">-</span><span style="letter-spacing:1px">-</span></div>
<div class="t" style="left:1204px;top:504px;font-size:12px;color:#6d6d6d;">jma</div>
<div class="t" style="left:974px;top:523px;font-size:12px;color:#6d6d6d;letter-spacing:-0.42px">13/06/2014 11:28:39</div>
<div class="t" style="left:1125px;top:523px;font-size:12px;color:#6d6d6d;">rw<span style="letter-spacing:1px">-</span><span style="letter-spacing:1px">-</span><span style="letter-spacing:1px">-</span><span style="letter-spacing:1px">-</span><span style="letter-spacing:1px">-</span><span style="letter-spacing:1px">-</span><span style="letter-spacing:1px">-</span></div>
<div class="t" style="left:1204px;top:523px;font-size:12px;color:#6d6d6d;">jma</div>
<div class="t" style="left:974px;top:542px;font-size:12px;color:#6d6d6d;letter-spacing:-0.42px">13/06/2014 15:10:14</div>
<div class="t" style="left:1125px;top:542px;font-size:12px;color:#6d6d6d;">rw<span style="letter-spacing:1px">-</span><span style="letter-spacing:1px">-</span><span style="letter-spacing:1px">-</span><span style="letter-spacing:1px">-</span><span style="letter-spacing:1px">-</span><span style="letter-spacing:1px">-</span><span style="letter-spacing:1px">-</span></div>
<div class="t" style="left:1204px;top:542px;font-size:12px;color:#6d6d6d;">jma</div>
<svg class="abs" style="left:754px;top:558px;" width="15" height="17" viewBox="0 0 15 17"><path d="M1.5 1.5 H9 L13.5 6 V15.5 H1.5Z" fill="#fff" stroke="#8a8a8a"/><path d="M9 1.5 V6 H13.5" fill="none" stroke="#8a8a8a"/></svg>
<div class="t" style="left:772px;top:561px;font-size:12px;color:#6d6d6d;">.Xauthority</div>
<div class="t" style="right:720px;top:561px;font-size:12px;color:#6d6d6d;">558 B</div>
<div class="t" style="left:974px;top:561px;font-size:12px;color:#6d6d6d;letter-spacing:-0.42px">13/06/2014 10:08:20</div>
<div class="t" style="left:1125px;top:561px;font-size:12px;color:#6d6d6d;">rw<span style="letter-spacing:1px">-</span><span style="letter-spacing:1px">-</span><span style="letter-spacing:1px">-</span><span style="letter-spacing:1px">-</span><span style="letter-spacing:1px">-</span><span style="letter-spacing:1px">-</span><span style="letter-spacing:1px">-</span></div>
<div class="t" style="left:1204px;top:561px;font-size:12px;color:#6d6d6d;">jma</div>
<div class="abs" style="left:1062px;top:874px;width:1px;height:18px;background:#d0d0d0;box-shadow:1px 0 0 #fff"></div>
<div class="abs" style="left:1098px;top:874px;width:1px;height:18px;background:#d0d0d0;box-shadow:1px 0 0 #fff"></div>
<div class="abs" style="left:1164px;top:874px;width:1px;height:18px;background:#d0d0d0;box-shadow:1px 0 0 #fff"></div>
<div class="abs" style="left:1200px;top:874px;width:1px;height:18px;background:#d0d0d0;box-shadow:1px 0 0 #fff"></div>
<svg class="abs" style="left:1069px;top:873px;" width="16" height="17" viewBox="0 0 16 17"><path d="M4 8 V5 A4 4 0 0 1 12 5 V8" fill="none" stroke="#b88a10" stroke-width="2"/><rect x="2" y="8" width="12" height="9" rx="1" fill="#f0c030" stroke="#b88a10"/><rect x="7" y="11" width="2" height="3" fill="#7a5a00"/></svg>
<div class="t" style="left:1112px;top:876px;font-size:12px;color:#000;">SFTP-3</div>
<svg class="abs" style="left:1174px;top:874px;" width="16" height="15" viewBox="0 0 16 15"><rect x="1" y="1" width="10" height="8" fill="#e0e0e0" stroke="#a8a8a8"/><rect x="3" y="3" width="10" height="8" fill="#d8d8d8" stroke="#a8a8a8"/><path d="M8 11 V14 M5 14 H11" stroke="#a8a8a8"/></svg>
<div class="t" style="left:1222px;top:876px;font-size:12px;color:#000;">0:00:46</div>
<svg class="abs" style="left:1270px;top:880px;" width="12" height="12" viewBox="0 0 12 12"><path d="M11 1 L1 11 M11 5 L5 11 M11 9 L9 11" stroke="#a8a8a8" stroke-width="1"/></svg>
<div class="abs" style="left:471px;top:85px;width:560px;height:472px;border-radius:6px;box-shadow:0 3px 14px 4px rgba(0,0,0,0.62)"></div>
<div class="abs" style="left:471px;top:81px;width:560px;height:476px;border-radius:6px;border:1px solid #0c1a2c;
background:
 linear-gradient(90deg, rgba(170,190,212,0.9) 0px, rgba(150,175,205,0.55) 20px, rgba(60,100,150,0) 80px),
 linear-gradient(100deg, rgba(150,180,215,0) 100px, rgba(150,180,215,0.25) 140px, rgba(150,180,215,0) 200px, rgba(150,180,215,0) 390px, rgba(150,180,215,0.3) 440px, rgba(150,180,215,0.15) 465px, rgba(160,190,222,0.45) 530px),
 linear-gradient(180deg,#225690 0px,#235891 26px,#6a94c0 40px,#a0c0e0 200px,#b0d0f0 380px,#b8dcf8 476px);
box-shadow:inset 0 0 0 1px rgba(255,255,255,0.7)"></div>
<div class="abs" style="left:474px;top:85px;width:74px;height:19px;background:rgba(186,204,224,0.92);border-radius:9px;filter:blur(5px)"></div>
<div class="t" style="left:478px;top:89px;font-size:12px;color:#000;">Préférences</div>
<div class="abs" style="left:948px;top:81px;width:29px;height:19px;background:linear-gradient(180deg,#c0d0e0 0,#a8bcd2 45%,#5e7ea2 50%,#6e8eb2 100%);border:1px solid #1f2f45;border-top:none;border-right:none;border-radius:0 0 0 5px;box-shadow:inset 0 0 0 1px rgba(255,255,255,0.5)"></div>
<div class="abs" style="left:976px;top:81px;width:48px;height:19px;background:linear-gradient(180deg,#e4a49c 0,#d88a80 45%,#c03a22 52%,#c4503a 80%,#d07a60 100%);border:1px solid #3a0c08;border-top:none;border-radius:0 0 5px 0;box-shadow:inset 0 0 0 1px rgba(255,230,220,0.55)"></div>
<svg class="abs" style="left:957px;top:84px;" width="12" height="14" viewBox="0 0 12 14"><path d="M2.5 4.5 Q2.5 1.5 6 1.5 Q9.5 1.5 9.5 4.5 Q9.5 6.5 6.5 7.5 V9" fill="none" stroke="#333" stroke-width="3.6"/><rect x="4.2" y="10.2" width="3.8" height="3.2" fill="#333"/><path d="M2.5 4.5 Q2.5 1.5 6 1.5 Q9.5 1.5 9.5 4.5 Q9.5 6.5 6.5 7.5 V9" fill="none" stroke="#fff" stroke-width="2"/><rect x="5" y="11" width="2.2" height="1.8" fill="#fff"/></svg>
<svg class="abs" style="left:992px;top:84px;" width="15" height="13" viewBox="0 0 15 13"><path d="M2.5 2 L12.5 11 M12.5 2 L2.5 11" stroke="#333" stroke-width="4.2"/><path d="M2.5 2 L12.5 11 M12.5 2 L2.5 11" stroke="#fff" stroke-width="2.4"/></svg>
<div class="abs" style="left:477px;top:108px;width:547px;height:442px;background:#f0f0f0;border:1px solid #3a4c60;box-shadow:0 0 0 1px rgba(255,255,255,0.5)"></div>
<div class="abs" style="left:486px;top:119px;width:116px;height:392px;background:#fff;border:1px solid #828790"></div>
<div class="abs" style="left:508px;top:329px;width:42px;height:16px;background:linear-gradient(180deg,#eef6fe,#d8ecfc);border:1px solid #7eb4ea;border-radius:3px"></div>
<div class="t" style="left:492px;top:124px;font-size:11px;color:#000;letter-spacing:-0.15px;">Environnement</div>
<div class="t" style="left:511px;top:140px;font-size:11px;color:#000;letter-spacing:-0.15px;">Interface</div>
<div class="t" style="left:511px;top:156px;font-size:11px;color:#000;letter-spacing:-0.15px;">Fenêtre</div>
<div class="t" style="left:511px;top:172px;font-size:11px;color:#000;letter-spacing:-0.15px;">Commander</div>
<div class="t" style="left:511px;top:188px;font-size:11px;color:#000;letter-spacing:-0.15px;">Explorateur</div>
<div class="t" style="left:511px;top:204px;font-size:11px;color:#000;letter-spacing:-0.15px;">Langues</div>
<div class="t" style="left:492px;top:220px;font-size:11px;color:#000;letter-spacing:-0.15px;">Panneaux</div>
<div class="t" style="left:511px;top:236px;font-size:11px;color:#000;letter-spacing:-0.15px;">Distant</div>
<div class="t" style="left:511px;top:252px;font-size:11px;color:#000;letter-spacing:-0.15px;">Local</div>
<div class="t" style="left:492px;top:268px;font-size:11px;color:#000;letter-spacing:-0.15px;">Editeurs</div>
<div class="t" style="left:492px;top:284px;font-size:11px;color:#000;letter-spacing:-0.15px;">Transferts</div>
<div class="t" style="left:511px;top:300px;font-size:11px;color:#000;letter-spacing:-0.15px;">Glisser-Déposer</div>
<div class="t" style="left:511px;top:316px;font-size:11px;color:#000;letter-spacing:-0.15px;">En arrière plan</div>
<div class="t" style="left:511px;top:332px;font-size:11px;color:#000;letter-spacing:-0.15px;">Solidité</div>
<div class="t" style="left:492px;top:348px;font-size:11px;color:#000;letter-spacing:-0.15px;">Réseau</div>
<div class="t" style="left:492px;top:364px;font-size:11px;color:#000;letter-spacing:-0.15px;">Sécurité</div>
<div class="t" style="left:492px;top:380px;font-size:11px;color:#000;letter-spacing:-0.15px;">Rapports</div>
<div class="t" style="left:492px;top:396px;font-size:11px;color:#000;letter-spacing:-0.15px;">Intégration</div>
<div class="t" style="left:511px;top:412px;font-size:11px;color:#000;letter-spacing:-0.15px;">Applications</div>
<div class="t" style="left:492px;top:428px;font-size:11px;color:#000;letter-spacing:-0.15px;">Commandes</div>
<div class="t" style="left:492px;top:444px;font-size:11px;color:#000;letter-spacing:-0.15px;">Enregistrement</div>
<div class="t" style="left:492px;top:460px;font-size:11px;color:#000;letter-spacing:-0.15px;">Mises à jour</div>
<svg class="abs" style="left:0;top:0" width="1680" height="1050" viewBox="0 0 1680 1050"><rect x="501" y="145" width="1" height="1" fill="#a0a0a0"/><rect x="503" y="145" width="1" height="1" fill="#a0a0a0"/><rect x="505" y="145" width="1" height="1" fill="#a0a0a0"/><rect x="507" y="145" width="1" height="1" fill="#a0a0a0"/><rect x="501" y="161" width="1" height="1" fill="#a0a0a0"/><rect x="503" y="161" width="1" height="1" fill="#a0a0a0"/><rect x="505" y="161" width="1" height="1" fill="#a0a0a0"/><rect x="507" y="161" width="1" height="1" fill="#a0a0a0"/><rect x="501" y="177" width="1" height="1" fill="#a0a0a0"/><rect x="503" y="177" width="1" height="1" fill="#a0a0a0"/><rect x="505" y="177" width="1" height="1" fill="#a0a0a0"/><rect x="507" y="177" width="1" height="1" fill="#a0a0a0"/><rect x="501" y="193" width="1" height="1" fill="#a0a0a0"/><rect x="503" y="193" width="1" height="1" fill="#a0a0a0"/><rect x="505" y="193" width="1" height="1" fill="#a0a0a0"/><rect x="507" y="193" width="1" height="1" fill="#a0a0a0"/><rect x="501" y="209" width="1" height="1" fill="#a0a0a0"/><rect x="503" y="209" width="1" height="1" fill="#a0a0a0"/><rect x="505" y="209" width="1" height="1" fill="#a0a0a0"/><rect x="507" y="209" width="1" height="1" fill="#a0a0a0"/><rect x="501" y="241" width="1" height="1" fill="#a0a0a0"/><rect x="503" y="241" width="1" height="1" fill="#a0a0a0"/><rect x="505" y="241" width="1" height="1" fill="#a0a0a0"/><rect x="507" y="241" width="1" height="1" fill="#a0a0a0"/><rect x="501" y="257" width="1" height="1" fill="#a0a0a0"/><rect x="503" y="257" width="1" height="1" fill="#a0a0a0"/><rect x="505" y="257" width="1" height="1" fill="#a0a0a0"/><rect x="507" y="257" width="1" height="1" fill="#a0a0a0"/><rect x="501" y="305" width="1" height="1" fill="#a0a0a0"/><rect x="503" y="305" width="1" height="1" fill="#a0a0a0"/><rect x="505" y="305" width="1" height="1" fill="#a0a0a0"/><rect x="507" y="305" width="1" height="1" fill="#a0a0a0"/><rect x="501" y="321" width="1" height="1" fill="#a0a0a0"/><rect x="503" y="321" width="1" height="1" fill="#a0a0a0"/><rect x="505" y="321" width="1" height="1" fill="#a0a0a0"/><rect x="507" y="321" width="1" height="1" fill="#a0a0a0"/><rect x="501" y="337" width="1" height="1" fill="#a0a0a0"/><rect x="503" y="337" width="1" height="1" fill="#a0a0a0"/><rect x="505" y="337" width="1" height="1" fill="#a0a0a0"/><rect x="507" y="337" width="1" height="1" fill="#a0a0a0"/><rect x="501" y="417" width="1" height="1" fill="#a0a0a0"/><rect x="503" y="417" width="1" height="1" fill="#a0a0a0"/><rect x="505" y="417" width="1" height="1" fill="#a0a0a0"/><rect x="507" y="417" width="1" height="1" fill="#a0a0a0"/><rect x="501" y="137" width="1" height="1" fill="#a0a0a0"/><rect x="501" y="139" width="1" height="1" fill="#a0a0a0"/><rect x="501" y="141" width="1" height="1" fill="#a0a0a0"/><rect x="501" y="143" width="1" height="1" fill="#a0a0a0"/><rect x="501" y="145" width="1" height="1" fill="#a0a0a0"/><rect x="501" y="147" width="1" height="1" fill="#a0a0a0"/><rect x="501" y="149" width="1" height="1" fill="#a0a0a0"/><rect x="501" y="151" width="1" height="1" fill="#a0a0a0"/><rect x="501" y="153" width="1" height="1" fill="#a0a0a0"/><rect x="501" y="155" width="1" height="1" fill="#a0a0a0"/><rect x="501" y="157" width="1" height="1" fill="#a0a0a0"/><rect x="501" y="159" width="1" height="1" fill="#a0a0a0"/><rect x="501" y="161" width="1" height="1" fill="#a0a0a0"/><rect x="501" y="163" width="1" height="1" fill="#a0a0a0"/><rect x="501" y="165" width="1" height="1" fill="#a0a0a0"/><rect x="501" y="167" width="1" height="1" fill="#a0a0a0"/><rect x="501" y="169" width="1" height="1" fill="#a0a0a0"/><rect x="501" y="171" width="1" height="1" fill="#a0a0a0"/><rect x="501" y="173" width="1" height="1" fill="#a0a0a0"/><rect x="501" y="175" width="1" height="1" fill="#a0a0a0"/><rect x="501" y="177" width="1" height="1" fill="#a0a0a0"/><rect x="501" y="179" width="1" height="1" fill="#a0a0a0"/><rect x="501" y="181" width="1" height="1" fill="#a0a0a0"/><rect x="501" y="183" width="1" height="1" fill="#a0a0a0"/><rect x="501" y="185" width="1" height="1" fill="#a0a0a0"/><rect x="501" y="187" width="1" height="1" fill="#a0a0a0"/><rect x="501" y="189" width="1" height="1" fill="#a0a0a0"/><rect x="501" y="191" width="1" height="1" fill="#a0a0a0"/><rect x="501" y="193" width="1" height="1" fill="#a0a0a0"/><rect x="501" y="195" width="1" height="1" fill="#a0a0a0"/><rect x="501" y="197" width="1" height="1" fill="#a0a0a0"/><rect x="501" y="199" width="1" height="1" fill="#a0a0a0"/><rect x="501" y="201" width="1" height="1" fill="#a0a0a0"/><rect x="501" y="203" width="1" height="1" fill="#a0a0a0"/><rect x="501" y="205" width="1" height="1" fill="#a0a0a0"/><rect x="501" y="207" width="1" height="1" fill="#a0a0a0"/><rect x="501" y="209" width="1" height="1" fill="#a0a0a0"/><rect x="501" y="233" width="1" height="1" fill="#a0a0a0"/><rect x="501" y="235" width="1" height="1" fill="#a0a0a0"/><rect x="501" y="237" width="1" height="1" fill="#a0a0a0"/><rect x="501" y="239" width="1" height="1" fill="#a0a0a0"/><rect x="501" y="241" width="1" height="1" fill="#a0a0a0"/><rect x="501" y="243" width="1" height="1" fill="#a0a0a0"/><rect x="501" y="245" width="1" height="1" fill="#a0a0a0"/><rect x="501" y="247" width="1" height="1" fill="#a0a0a0"/><rect x="501" y="249" width="1" height="1" fill="#a0a0a0"/><rect x="501" y="251" width="1" height="1" fill="#a0a0a0"/><rect x="501" y="253" width="1" height="1" fill="#a0a0a0"/><rect x="501" y="255" width="1" height="1" fill="#a0a0a0"/><rect x="501" y="257" width="1" height="1" fill="#a0a0a0"/><rect x="501" y="297" width="1" height="1" fill="#a0a0a0"/><rect x="501" y="299" width="1" height="1" fill="#a0a0a0"/><rect x="501" y="301" width="1" height="1" fill="#a0a0a0"/><rect x="501" y="303" width="1" height="1" fill="#a0a0a0"/><rect x="501" y="305" width="1" height="1" fill="#a0a0a0"/><rect x="501" y="307" width="1" height="1" fill="#a0a0a0"/><rect x="501" y="309" width="1" height="1" fill="#a0a0a0"/><rect x="501" y="311" width="1" height="1" fill="#a0a0a0"/><rect x="501" y="313" width="1" height="1" fill="#a0a0a0"/><rect x="501" y="315" width="1" height="1" fill="#a0a0a0"/><rect x="501" y="317" width="1" height="1" fill="#a0a0a0"/><rect x="501" y="319" width="1" height="1" fill="#a0a0a0"/><rect x="501" y="321" width="1" height="1" fill="#a0a0a0"/><rect x="501" y="323" width="1" height="1" fill="#a0a0a0"/><rect x="501" y="325" width="1" height="1" fill="#a0a0a0"/><rect x="501" y="327" width="1" height="1" fill="#a0a0a0"/><rect x="501" y="329" width="1" height="1" fill="#a0a0a0"/><rect x="501" y="331" width="1" height="1" fill="#a0a0a0"/><rect x="501" y="333" width="1" height="1" fill="#a0a0a0"/><rect x="501" y="335" width="1" height="1" fill="#a0a0a0"/><rect x="501" y="337" width="1" height="1" fill="#a0a0a0"/><rect x="501" y="409" width="1" height="1" fill="#a0a0a0"/><rect x="501" y="411" width="1" height="1" fill="#a0a0a0"/><rect x="501" y="413" width="1" height="1" fill="#a0a0a0"/><rect x="501" y="415" width="1" height="1" fill="#a0a0a0"/><rect x="501" y="417" width="1" height="1" fill="#a0a0a0"/></svg>
<div class="abs" style="left:623px;top:131px;width:388px;height:116px;border:1px solid #d5dfe5;border-radius:3px;box-shadow:inset 1px 1px 0 #fff, 1px 1px 0 #fff"></div>
<div class="abs" style="left:627px;top:124px;width:300px;height:14px;background:#f0f0f0"></div>
<div class="t" style="left:630px;top:126px;font-size:11px;color:#000;letter-spacing:-0.15px;">Autoriser la reprise/transférer vers un fichier temporaire pour</div>
<div class="abs" style="left:623px;top:262px;width:388px;height:196px;border:1px solid #d5dfe5;border-radius:3px;box-shadow:inset 1px 1px 0 #fff, 1px 1px 0 #fff"></div>
<div class="abs" style="left:627px;top:255px;width:130px;height:14px;background:#f0f0f0"></div>
<div class="t" style="left:630px;top:257px;font-size:11px;color:#000;letter-spacing:-0.15px;">Reconnexion automatique</div>
<svg class="abs" style="left:638px;top:148px;" width="13" height="13" viewBox="0 0 13 13"><defs><radialGradient id="rg" cx="0.35" cy="0.3" r="0.8"><stop offset="0" stop-color="#fff"/><stop offset="1" stop-color="#dcdcdc"/></radialGradient><radialGradient id="rgo" cx="0.4" cy="0.35" r="0.7"><stop offset="0" stop-color="#9ee0ff"/><stop offset="0.6" stop-color="#1e7ac8"/><stop offset="1" stop-color="#0b3c78"/></radialGradient></defs><circle cx="6.5" cy="6.5" r="6" fill="url(#rg)" stroke="#8a8a8a" stroke-width="1"/></svg>
<div class="t" style="left:653px;top:149px;font-size:11px;color:#000;letter-spacing:-0.15px;">Tous les fichiers</div>
<svg class="abs" style="left:638px;top:172px;" width="13" height="13" viewBox="0 0 13 13"><defs><radialGradient id="rg" cx="0.35" cy="0.3" r="0.8"><stop offset="0" stop-color="#fff"/><stop offset="1" stop-color="#dcdcdc"/></radialGradient><radialGradient id="rgo" cx="0.4" cy="0.35" r="0.7"><stop offset="0" stop-color="#9ee0ff"/><stop offset="0.6" stop-color="#1e7ac8"/><stop offset="1" stop-color="#0b3c78"/></radialGradient></defs><circle cx="6.5" cy="6.5" r="6" fill="url(#rg)" stroke="#8a8a8a" stroke-width="1"/><circle cx="6.5" cy="6.5" r="3.3" fill="url(#rgo)" stroke="#1a3a6a" stroke-width="0.6"/></svg>
<div class="t" style="left:653px;top:173px;font-size:11px;color:#000;letter-spacing:-0.15px;">Les fichiers suivants</div>
<svg class="abs" style="left:638px;top:220px;" width="13" height="13" viewBox="0 0 13 13"><defs><radialGradient id="rg" cx="0.35" cy="0.3" r="0.8"><stop offset="0" stop-color="#fff"/><stop offset="1" stop-color="#dcdcdc"/></radialGradient><radialGradient id="rgo" cx="0.4" cy="0.35" r="0.7"><stop offset="0" stop-color="#9ee0ff"/><stop offset="0.6" stop-color="#1e7ac8"/><stop offset="1" stop-color="#0b3c78"/></radialGradient></defs><circle cx="6.5" cy="6.5" r="6" fill="url(#rg)" stroke="#8a8a8a" stroke-width="1"/></svg>
<div class="t" style="left:653px;top:221px;font-size:11px;color:#000;letter-spacing:-0.15px;">Les fichiers suivants</div>
<div class="abs" style="left:668px;top:191px;width:83px;height:21px;background:#fff;border:1px solid #d0d4da;border-top-color:#abadb3;border-radius:2px"></div><div class="t" style="right:949px;top:196px;font-size:11px;color:#000;letter-spacing:-0.15px;">100</div><div class="abs" style="left:735px;top:193px;width:14px;height:8px;background:linear-gradient(180deg,#fbfbfb,#eeeeee);border:1px solid #c4c8ce;border-radius:1px"></div><div class="abs" style="left:735px;top:201px;width:14px;height:9px;background:linear-gradient(180deg,#fbfbfb,#eeeeee);border:1px solid #c4c8ce;border-radius:1px"></div><svg class="abs" style="left:739px;top:196px;" width="6" height="4" viewBox="0 0 6 4"><path d="M0 3.5 L3 0.5 L6 3.5Z" fill="#5878b0"/></svg><svg class="abs" style="left:739px;top:204px;" width="6" height="4" viewBox="0 0 6 4"><path d="M0 0.5 L3 3.5 L6 0.5Z" fill="#5878b0"/></svg>
<div class="t" style="left:758px;top:197px;font-size:11px;color:#000;letter-spacing:-0.15px;">KB</div>
<svg class="abs" style="left:638px;top:278px;" width="13" height="13" viewBox="0 0 13 13"><rect x="0.5" y="0.5" width="12" height="12" fill="#8e8f8f"/><rect x="1.5" y="1.5" width="10" height="10" fill="url(#cg)"/><defs><linearGradient id="cg" x1="0" y1="0" x2="1" y2="1"><stop offset="0" stop-color="#dcdcdc"/><stop offset="1" stop-color="#fafafa"/></linearGradient></defs><path d="M3 6 L5.3 9.2 L10 2.8" fill="none" stroke="#2a4a98" stroke-width="1.6"/></svg>
<div class="t" style="left:653px;top:280px;font-size:11px;color:#000;letter-spacing:-0.15px;">Reconnexion automatique si une déconnexion a lieu durant un tran</div>
<div class="t" style="left:655px;top:305px;font-size:11px;color:#000;letter-spacing:-0.15px;">Reconnexion après</div>
<div class="abs" style="left:790px;top:298px;width:97px;height:20px;background:#fff;border:1px solid #d0d4da;border-top-color:#abadb3;border-radius:2px"></div><div class="t" style="right:813px;top:303px;font-size:11px;color:#000;letter-spacing:-0.15px;">5</div><div class="abs" style="left:871px;top:300px;width:14px;height:8px;background:linear-gradient(180deg,#fbfbfb,#eeeeee);border:1px solid #c4c8ce;border-radius:1px"></div><div class="abs" style="left:871px;top:308px;width:14px;height:8px;background:linear-gradient(180deg,#fbfbfb,#eeeeee);border:1px solid #c4c8ce;border-radius:1px"></div><svg class="abs" style="left:875px;top:303px;" width="6" height="4" viewBox="0 0 6 4"><path d="M0 3.5 L3 0.5 L6 3.5Z" fill="#5878b0"/></svg><svg class="abs" style="left:875px;top:311px;" width="6" height="4" viewBox="0 0 6 4"><path d="M0 0.5 L3 3.5 L6 0.5Z" fill="#5878b0"/></svg>
<div class="t" style="left:892px;top:305px;font-size:11px;color:#000;letter-spacing:-0.15px;">secondes</div>
<svg class="abs" style="left:638px;top:329px;" width="13" height="13" viewBox="0 0 13 13"><rect x="0.5" y="0.5" width="12" height="12" fill="#8e8f8f"/><rect x="1.5" y="1.5" width="10" height="10" fill="url(#cg)"/><defs><linearGradient id="cg" x1="0" y1="0" x2="1" y2="1"><stop offset="0" stop-color="#dcdcdc"/><stop offset="1" stop-color="#fafafa"/></linearGradient></defs><path d="M3 6 L5.3 9.2 L10 2.8" fill="none" stroke="#2a4a98" stroke-width="1.6"/></svg>
<div class="t" style="left:653px;top:331px;font-size:11px;color:#000;letter-spacing:-0.15px;">Reconnexion automatique après une période d'inactivité</div>
<div class="t" style="left:655px;top:356px;font-size:11px;color:#000;letter-spacing:-0.15px;">Reconnexion après :</div>
<div class="abs" style="left:790px;top:349px;width:97px;height:20px;background:#fff;border:1px solid #d0d4da;border-top-color:#abadb3;border-radius:2px"></div><div class="t" style="right:813px;top:354px;font-size:11px;color:#000;letter-spacing:-0.15px;">9</div><div class="abs" style="left:871px;top:351px;width:14px;height:8px;background:linear-gradient(180deg,#fbfbfb,#eeeeee);border:1px solid #c4c8ce;border-radius:1px"></div><div class="abs" style="left:871px;top:359px;width:14px;height:8px;background:linear-gradient(180deg,#fbfbfb,#eeeeee);border:1px solid #c4c8ce;border-radius:1px"></div><svg class="abs" style="left:875px;top:354px;" width="6" height="4" viewBox="0 0 6 4"><path d="M0 3.5 L3 0.5 L6 3.5Z" fill="#5878b0"/></svg><svg class="abs" style="left:875px;top:362px;" width="6" height="4" viewBox="0 0 6 4"><path d="M0 0.5 L3 3.5 L6 0.5Z" fill="#5878b0"/></svg>
<div class="t" style="left:892px;top:356px;font-size:11px;color:#000;letter-spacing:-0.15px;">secondes</div>
<svg class="abs" style="left:638px;top:379px;" width="13" height="13" viewBox="0 0 13 13"><rect x="0.5" y="0.5" width="12" height="12" fill="#8e8f8f"/><rect x="1.5" y="1.5" width="10" height="10" fill="url(#cg)"/><defs><linearGradient id="cg" x1="0" y1="0" x2="1" y2="1"><stop offset="0" stop-color="#dcdcdc"/><stop offset="1" stop-color="#fafafa"/></linearGradient></defs><path d="M3 6 L5.3 9.2 L10 2.8" fill="none" stroke="#2a4a98" stroke-width="1.6"/></svg>
<div class="t" style="left:653px;top:381px;font-size:11px;color:#000;letter-spacing:-0.15px;">Reconnecter automatiquement la session si elle bloque</div>
<div class="t" style="left:655px;top:406px;font-size:11px;color:#000;letter-spacing:-0.15px;">Reconnexion après :</div>
<div class="abs" style="left:790px;top:399px;width:97px;height:20px;background:#fff;border:1px solid #d0d4da;border-top-color:#abadb3;border-radius:2px"></div><div class="t" style="right:813px;top:404px;font-size:11px;color:#000;letter-spacing:-0.15px;">60</div><div class="abs" style="left:871px;top:401px;width:14px;height:8px;background:linear-gradient(180deg,#fbfbfb,#eeeeee);border:1px solid #c4c8ce;border-radius:1px"></div><div class="abs" style="left:871px;top:409px;width:14px;height:8px;background:linear-gradient(180deg,#fbfbfb,#eeeeee);border:1px solid #c4c8ce;border-radius:1px"></div><svg class="abs" style="left:875px;top:404px;" width="6" height="4" viewBox="0 0 6 4"><path d="M0 3.5 L3 0.5 L6 3.5Z" fill="#5878b0"/></svg><svg class="abs" style="left:875px;top:412px;" width="6" height="4" viewBox="0 0 6 4"><path d="M0 0.5 L3 3.5 L6 0.5Z" fill="#5878b0"/></svg>
<div class="t" style="left:892px;top:406px;font-size:11px;color:#000;letter-spacing:-0.15px;">secondes</div>
<div class="abs" style="left:637px;top:430px;width:153px;height:14px;overflow:hidden"><div class="t" style="left:0px;top:3px;font-size:11px;color:#000;letter-spacing:-0.15px;">Essayer de se reconnecter pendant</div></div>
<div class="abs" style="left:790px;top:426px;width:97px;height:20px;background:#fff;border:1px solid #d0d4da;border-top-color:#abadb3;border-radius:2px"></div><div class="t" style="right:813px;top:431px;font-size:11px;color:#000;letter-spacing:-0.15px;">Illimitée</div><div class="abs" style="left:871px;top:428px;width:14px;height:8px;background:linear-gradient(180deg,#fbfbfb,#eeeeee);border:1px solid #c4c8ce;border-radius:1px"></div><div class="abs" style="left:871px;top:436px;width:14px;height:8px;background:linear-gradient(180deg,#fbfbfb,#eeeeee);border:1px solid #c4c8ce;border-radius:1px"></div><svg class="abs" style="left:875px;top:431px;" width="6" height="4" viewBox="0 0 6 4"><path d="M0 3.5 L3 0.5 L6 3.5Z" fill="#5878b0"/></svg><svg class="abs" style="left:875px;top:439px;" width="6" height="4" viewBox="0 0 6 4"><path d="M0 0.5 L3 3.5 L6 0.5Z" fill="#5878b0"/></svg>
<div class="t" style="left:892px;top:433px;font-size:11px;color:#000;letter-spacing:-0.15px;">secondes</div>
<div class="abs" style="left:761px;top:519px;width:73px;height:23px;background:linear-gradient(180deg,#f0f6fa 0,#e6eff5 45%,#d2e3ee 50%,#c4d9e8 100%);border:1px solid #3c7fb1;border-radius:3px;box-shadow:inset 0 0 0 1px #5fd0f8"></div><div class="t" style="left:597px;width:400px;text-align:center;top:526px;font-size:11px;color:#000;letter-spacing:-0.15px;">OK</div>
<div class="abs" style="left:849px;top:519px;width:73px;height:23px;background:linear-gradient(180deg,#f2f2f2 0,#ebebeb 45%,#dddddd 50%,#cfcfcf 100%);border:1px solid #707070;border-radius:3px;box-shadow:inset 0 0 0 1px rgba(255,255,255,0.8)"></div><div class="t" style="left:685px;width:400px;text-align:center;top:526px;font-size:11px;color:#000;letter-spacing:-0.15px;">Annuler</div>
<div class="abs" style="left:937px;top:519px;width:73px;height:23px;background:linear-gradient(180deg,#f2f2f2 0,#ebebeb 45%,#dddddd 50%,#cfcfcf 100%);border:1px solid #707070;border-radius:3px;box-shadow:inset 0 0 0 1px rgba(255,255,255,0.8)"></div><div class="t" style="left:773px;width:400px;text-align:center;top:526px;font-size:11px;color:#000;letter-spacing:-0.15px;">Aide</div>
<div class="abs" style="left:0px;top:1010px;width:1680px;height:40px;background:linear-gradient(180deg,rgba(255,255,255,0.10) 0,rgba(255,255,255,0.04) 50%,rgba(0,0,0,0.05) 100%),linear-gradient(90deg,rgba(20,60,110,0.38) 0,rgba(20,60,110,0.32) 40%,rgba(15,45,95,0.42) 80%,rgba(10,30,70,0.45) 100%);border-top:1px solid rgba(8,20,40,0.85);box-shadow:inset 0 1px 0 rgba(180,220,255,0.35)"></div>
<svg class="abs" style="left:7px;top:1011px;" width="40" height="39" viewBox="0 0 40 39">
<defs>
<radialGradient id="orb" cx="0.5" cy="0.55" r="0.55"><stop offset="0" stop-color="#2a9ad8"/><stop offset="0.6" stop-color="#14609a"/><stop offset="1" stop-color="#0a2e52"/></radialGradient>
<linearGradient id="orbh" x1="0" y1="0" x2="0" y2="1"><stop offset="0" stop-color="#fff" stop-opacity="0.55"/><stop offset="1" stop-color="#fff" stop-opacity="0"/></linearGradient>
</defs>
<circle cx="20" cy="19.5" r="18.5" fill="url(#orb)" stroke="#6aa0c8" stroke-width="0.8"/>
<path d="M9.5 12 Q13 10 19 12 L18 19 Q13 17 8.5 19Z" fill="#f05a22"/>
<path d="M20.5 12 Q26 14 31 12 L30 19 Q25 21 19.5 19Z" fill="#7cbb2a"/>
<path d="M8.5 20.5 Q13 18.5 18 20.5 L17 27.5 Q12 25.5 7.5 27.5Z" fill="#1aa0e8"/>
<path d="M19.5 20.5 Q25 22.5 30 20.5 L29 27.5 Q24 29.5 18.5 27.5Z" fill="#fcc020"/>
<ellipse cx="20" cy="11" rx="14" ry="8" fill="url(#orbh)"/>
</svg>
<svg class="abs" style="left:72px;top:1014px;" width="34" height="31" viewBox="0 0 34 31">
<defs><linearGradient id="ieg" x1="0" y1="0" x2="0.3" y2="1"><stop offset="0" stop-color="#7ad0fa"/><stop offset="0.5" stop-color="#2a86d6"/><stop offset="1" stop-color="#0c4494"/></linearGradient></defs>
<path d="M9.5 17 H26.5 A8.8 8.8 0 1 0 24 23.5" fill="none" stroke="#0a3478" stroke-width="6.4"/>
<path d="M9.5 17 H26.5 A8.8 8.8 0 1 0 24 23.5" fill="none" stroke="url(#ieg)" stroke-width="5"/>
<path d="M3.5 28 Q0 22 12 11 Q26 -1 31.5 2.5 Q34.5 6 26 14" fill="none" stroke="#f0b828" stroke-width="2.2"/>
</svg>
<svg class="abs" style="left:134px;top:1015px;" width="34" height="30" viewBox="0 0 34 30">
<path d="M2 4 H12 L14 6 H31 V28 H2Z" fill="#e8c870" stroke="#c8a040" stroke-width="0.8"/>
<path d="M5 2.5 H17 V8 H5Z" fill="#fff"/><rect x="6" y="3" width="3" height="2" fill="#20b020"/>
<path d="M11 4 H25 V9 H11Z" fill="#fff"/><rect x="12" y="5" width="3" height="2" fill="#e02020"/>
<path d="M20 6 H31 V10 H20Z" fill="#fff"/><rect x="21" y="7" width="3" height="2" fill="#2080e0"/>
<path d="M2 10 H32 V28 H2Z" fill="#f8e4a0" stroke="#c8a040" stroke-width="0.8"/>
<path d="M6 17 H27 V30 H22 V23 H11 V30 H6Z" fill="#b8e0f8" fill-opacity="0.9" stroke="#6aaad8" stroke-width="0.8"/>
</svg>
<svg class="abs" style="left:197px;top:1018px;" width="32" height="27" viewBox="0 0 32 27">
<rect x="6" y="2" width="22" height="22" fill="#8ac4e4" opacity="0.7"/>
<rect x="3" y="1" width="22" height="24" fill="#a8d4f0" stroke="#7ab0d8" stroke-width="0.8"/>
<circle cx="14" cy="13" r="9" fill="#f07820"/><circle cx="14" cy="13" r="9" fill="none" stroke="#c85810" stroke-width="0.8"/>
<path d="M11 8 L19 13 L11 18Z" fill="#fff"/>
</svg>
<div class="abs" style="left:246px;top:1011px;width:59px;height:39px;background:linear-gradient(180deg,rgba(255,255,255,0.42) 0,rgba(255,255,255,0.3) 40%,rgba(255,255,255,0.19999999999999998) 100%);border:1px solid rgba(10,30,50,0.75);border-radius:3px;box-shadow:inset 0 0 0 1px rgba(255,255,255,0.45)"></div>
<div class="abs" style="left:308px;top:1011px;width:58px;height:39px;background:linear-gradient(180deg,rgba(255,255,255,0.42) 0,rgba(255,255,255,0.3) 40%,rgba(255,255,255,0.19999999999999998) 100%);border:1px solid rgba(10,30,50,0.75);border-radius:3px;box-shadow:inset 0 0 0 1px rgba(255,255,255,0.45)"></div>
<div class="abs" style="left:370px;top:1011px;width:58px;height:39px;background:linear-gradient(180deg,rgba(255,255,255,0.54) 0,rgba(255,255,255,0.42) 40%,rgba(255,255,255,0.31999999999999995) 100%);border:1px solid rgba(10,30,50,0.75);border-radius:3px;box-shadow:inset 0 0 0 1px rgba(255,255,255,0.45)"></div>
<svg class="abs" style="left:259px;top:1014px;" width="32" height="32" viewBox="0 0 32 32">
<defs><radialGradient id="ffb" cx="0.6" cy="0.35" r="0.6"><stop offset="0" stop-color="#5ac8f0"/><stop offset="0.6" stop-color="#1a4aa0"/><stop offset="1" stop-color="#0a1a60"/></radialGradient>
<linearGradient id="ffo" x1="0" y1="0" x2="1" y2="1"><stop offset="0" stop-color="#ffd83a"/><stop offset="0.5" stop-color="#f07020"/><stop offset="1" stop-color="#d03a10"/></linearGradient></defs>
<circle cx="17" cy="15" r="12.5" fill="url(#ffb)"/>
<path d="M6 7 Q3 14 5 20 Q9 30 19 29 Q28 28 30 18 Q30 12 27 8 Q28 16 22 21 Q15 25 10 20 Q16 22 19 18 Q14 18 12 14 Q14 11 17 11 Q12 8 9 11 Q8 8 6 7Z" fill="url(#ffo)"/>
</svg>
<svg class="abs" style="left:321px;top:1017px;" width="32" height="30" viewBox="0 0 32 30">
<rect x="1" y="1" width="30" height="22" fill="#4a94d0" stroke="#2a64a0" stroke-width="1"/>
<rect x="2" y="2" width="28" height="20" fill="#5aa8e0"/>
<circle cx="8.5" cy="9" r="4.5" fill="none" stroke="#fff" stroke-width="1.2"/><path d="M9 3 L13 6 L9 8Z" fill="#f8a020"/>
<rect x="17" y="6" width="11" height="4" fill="#cfe8fa"/><rect x="17" y="12" width="11" height="4" fill="#cfe8fa"/>
<rect x="22" y="7" width="5" height="2" fill="#2a6ac0"/><rect x="22" y="13" width="5" height="2" fill="#2a6ac0"/>
<circle cx="6" cy="17" r="1" fill="#cfe"/><circle cx="10" cy="17" r="1.3" fill="#f8a020"/>
<ellipse cx="16" cy="26" rx="7" ry="4" fill="#d8d8d8" stroke="#999" stroke-width="0.6"/>
</svg>
<svg class="abs" style="left:383px;top:1013px;" width="34" height="34" viewBox="0 0 34 34">
<defs><linearGradient id="lk" x1="0" x2="1"><stop offset="0" stop-color="#4a4a4a"/><stop offset="0.5" stop-color="#9a9a9a"/><stop offset="1" stop-color="#3a3a3a"/></linearGradient></defs>
<path d="M3 2 H12 L10 5 L14 9 L11 12 L7 8 L4 11Z" fill="#1a6ae8"/>
<path d="M12 14 V9 A5.5 5.5 0 0 1 23 9 V14" fill="none" stroke="#6a6a6a" stroke-width="2.6"/>
<rect x="9" y="14" width="17" height="14" rx="1.5" fill="url(#lk)"/>
<path d="M20 22 L25 27 L27 25 L30 30 L22 31 L24 29 L19 24Z" fill="#1ac01a"/>
<path d="M23 21 L31 21 L31 31 L21 31 L25 27Z" fill="#20c020"/>
</svg>
<div class="t" style="left:1463px;top:1023px;font-size:11px;color:#fff;letter-spacing:0px">FR</div>
<svg class="abs" style="left:1493px;top:1027px;" width="8" height="5" viewBox="0 0 8 5"><path d="M0 5 L4 0.5 L8 5Z" fill="#fff"/></svg>
<svg class="abs" style="left:1513px;top:1023px;" width="17" height="16" viewBox="0 0 17 16"><path d="M1.5 0 V16" stroke="#fff" stroke-width="1.5"/><path d="M2.5 1 Q6 3 9 1.5 Q12 0.5 15 2 L13 5 L15 8 Q12 6.5 9 8 Q6 9.5 2.5 8Z" fill="#fff"/></svg>
<svg class="abs" style="left:1537px;top:1024px;" width="17" height="15" viewBox="0 0 17 15"><rect x="4" y="3" width="12" height="9" fill="#2a4a6a" stroke="#fff" stroke-width="1.2"/><path d="M7 13 H13" stroke="#fff" stroke-width="1.4"/><path d="M1.5 0 V14 H4 M1 2 H3" stroke="#fff" stroke-width="1.2" fill="none"/></svg>
<svg class="abs" style="left:1561px;top:1024px;" width="16" height="14" viewBox="0 0 16 14"><path d="M1 4.5 H4 L8 1 V13 L4 9.5 H1Z" fill="#fff"/><path d="M10.5 4 Q12 7 10.5 10 M13 2.5 Q15.5 7 13 11.5" stroke="#fff" stroke-width="1.2" fill="none"/></svg>
<div class="t" style="left:1611px;top:1018px;font-size:11px;color:#fff;letter-spacing:0.2px">18:45</div>
<div class="t" style="left:1595px;top:1035px;font-size:11px;color:#fff;letter-spacing:0.35px">13/06/2014</div>
<div class="abs" style="left:1666px;top:1011px;width:14px;height:39px;background:linear-gradient(90deg,rgba(255,255,255,0.18),rgba(255,255,255,0.08));border-left:1px solid rgba(0,0,0,0.45);box-shadow:inset 1px 0 0 rgba(255,255,255,0.4)"></div>
</body></html>
